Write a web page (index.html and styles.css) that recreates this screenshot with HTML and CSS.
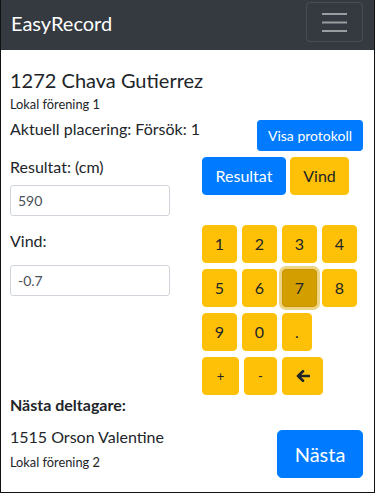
FILE: index.html
```html
<!DOCTYPE html>
<html lang="sv">
<head>
<meta charset="utf-8">
<title>EasyRecord</title>
<link rel="stylesheet" href="styles.css">
</head>
<body>
<div class="frame">
  <nav class="navbar">
    <span class="brand">EasyRecord</span>
    <button class="toggler" type="button" aria-label="Meny">
      <svg width="25" height="19" viewBox="0 0 25 19"><path d="M0 1h25M0 9.5h25M0 18h25" stroke="rgba(255,255,255,.5)" stroke-width="2" fill="none"/></svg>
    </button>
  </nav>
  <main class="content">
    <h1 class="athlete">1272 Chava Gutierrez</h1>
    <div class="club">Lokal förening 1</div>
    <div class="status-row">
      <span class="status">Aktuell placering: Försök: 1</span>
      <button class="btn btn-primary btn-sm btn-protocol" type="button">Visa protokoll</button>
    </div>
    <div class="entry">
      <div class="fields">
        <label class="field-label first">Resultat: (cm)</label>
        <input class="field-input" type="text" value="590">
        <label class="field-label">Vind:</label>
        <input class="field-input" type="text" value="-0.7">
      </div>
      <div class="pad">
        <div class="mode">
          <button class="btn btn-primary btn-result" type="button">Resultat</button>
          <button class="btn btn-warning btn-wind" type="button">Vind</button>
        </div>
        <div class="keys">
          <div class="key-row">
            <button class="btn btn-warning key" type="button">1</button>
            <button class="btn btn-warning key" type="button">2</button>
            <button class="btn btn-warning key" type="button">3</button>
            <button class="btn btn-warning key" type="button">4</button>
          </div>
          <div class="key-row">
            <button class="btn btn-warning key" type="button">5</button>
            <button class="btn btn-warning key" type="button">6</button>
            <button class="btn btn-warning key active" type="button">7</button>
            <button class="btn btn-warning key" type="button">8</button>
          </div>
          <div class="key-row">
            <button class="btn btn-warning key" type="button">9</button>
            <button class="btn btn-warning key" type="button">0</button>
            <button class="btn btn-warning key key-dot" type="button">.</button>
          </div>
          <div class="key-row">
            <button class="btn btn-warning key key-plus" type="button">+</button>
            <button class="btn btn-warning key key-minus" type="button">-</button>
            <button class="btn btn-warning key key-back" type="button" aria-label="Radera">
              <svg width="14" height="12" viewBox="0 0 14 12"><path d="M13 6H2.2M7 1.2L2 6l5 4.8" stroke="#212529" stroke-width="2.6" fill="none" stroke-linecap="round" stroke-linejoin="round"/></svg>
            </button>
          </div>
        </div>
      </div>
    </div>
    <div class="next">
      <div class="next-title">Nästa deltagare:</div>
      <div class="next-row">
        <div class="next-info">
          <div class="next-name">1515 Orson Valentine</div>
          <div class="club next-club">Lokal förening 2</div>
        </div>
        <button class="btn btn-primary btn-lg btn-next" type="button">Nästa</button>
      </div>
    </div>
  </main>
</div>
</body>
</html>
```

FILE: styles.css
```css
* { box-sizing: border-box; }

html, body {
  margin: 0;
  padding: 0;
  background: #fff;
}

body {
  font-family: Lato, "Open Sans", sans-serif;
  color: #212529;
  font-size: 16px;
}

.frame {
  width: 375px;
  height: 493px;
  border: 1px solid #111;
  border-top: 0;
  overflow: hidden;
}

.navbar {
  height: 50px;
  background: #343a40;
  display: flex;
  justify-content: space-between;
  align-items: flex-start;
  padding: 0 11px 0 10px;
}

.brand {
  color: #fff;
  font-size: 20px;
  line-height: 24px;
  margin-top: 10.5px;
}

.toggler {
  margin-top: 2px;
  width: 57px;
  height: 40px;
  background: transparent;
  border: 1px solid rgba(255,255,255,.1);
  border-radius: 4px;
  display: flex;
  align-items: center;
  justify-content: center;
  padding: 0;
}

.content {
  padding: 17px 11px 0 9px;
}

.athlete {
  margin: 0;
  font-size: 20px;
  font-weight: 400;
  line-height: 26px;
}

.club {
  font-size: 12.8px;
  line-height: 22px;
}

.status-row {
  display: flex;
  justify-content: space-between;
  align-items: flex-start;
}

.status {
  margin-top: 2px;
  line-height: 24px;
}

.btn {
  font-family: inherit;
  font-size: 16px;
  line-height: 24px;
  border: 1px solid transparent;
  border-radius: 4px;
  padding: 0;
  height: 38px;
  display: inline-flex;
  align-items: center;
  justify-content: center;
  cursor: pointer;
}

.btn-primary {
  background: #007bff;
  border-color: #007bff;
  color: #fff;
}

.btn-warning {
  background: #ffc107;
  border-color: #ffc107;
  color: #212529;
}

.btn-sm {
  font-size: 14px;
  height: 31px;
  border-radius: 3.2px;
}

.btn-lg {
  font-size: 20px;
  height: 48px;
  border-radius: 4.8px;
}

.btn-protocol {
  width: 106px;
  margin-top: 5px;
}

.entry {
  display: grid;
  grid-template-columns: 160px 1fr;
  column-gap: 32px;
}

.fields {
  display: flex;
  flex-direction: column;
}

.field-label {
  display: block;
  line-height: 24px;
  margin: 12.5px 0 12.5px;
}

.field-label.first {
  margin: 3.5px 0 6.5px;
}

.field-input {
  width: 160px;
  height: 31px;
  font-family: inherit;
  font-size: 14px;
  color: #495057;
  padding: 0 7px;
  border: 1px solid #ced4da;
  border-radius: 3.2px;
  background: #fff;
}

.mode {
  display: flex;
  gap: 4px;
  margin-top: 6px;
}

.btn-result { width: 84px; }
.btn-wind { width: 59px; }

.keys {
  margin-top: 30px;
  display: flex;
  flex-direction: column;
  gap: 6px;
}

.key-row {
  display: flex;
  gap: 5px;
}

.key { width: 35px; }
.key-dot { width: 30px; }
.key-plus { width: 37px; font-size: 13px; }
.key-minus { width: 33px; font-size: 13px; }
.key-back { width: 41px; }

.key.active {
  background: #d39e00;
  border-color: #c69500;
  box-shadow: 0 0 0 3px rgba(222,170,12,.5);
}

.next-title {
  font-weight: 700;
  line-height: 20px;
}

.next-row {
  display: flex;
  justify-content: space-between;
  align-items: flex-start;
}

.next-name {
  margin-top: 9.5px;
  line-height: 24px;
}

.next-club {
  margin-top: 2.5px;
}

.btn-next {
  width: 86px;
  margin-top: 15px;
}
```
